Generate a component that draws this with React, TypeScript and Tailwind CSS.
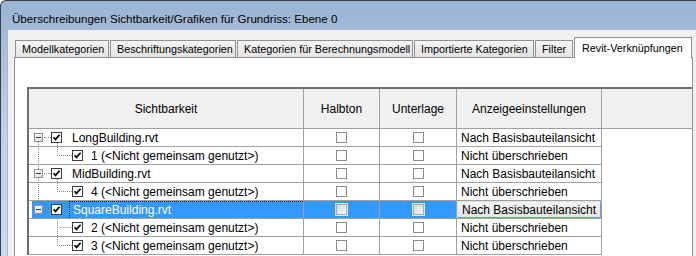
import React from 'react'

type Row = {
  kind: 'root' | 'child'
  label: string
  display: string
  selected?: boolean
}

const rows: Row[] = [
  { kind: 'root', label: 'LongBuilding.rvt', display: 'Nach Basisbauteilansicht' },
  { kind: 'child', label: '1 (<Nicht gemeinsam genutzt>)', display: 'Nicht überschrieben' },
  { kind: 'root', label: 'MidBuilding.rvt', display: 'Nach Basisbauteilansicht' },
  { kind: 'child', label: '4 (<Nicht gemeinsam genutzt>)', display: 'Nicht überschrieben' },
  { kind: 'root', label: 'SquareBuilding.rvt', display: 'Nach Basisbauteilansicht', selected: true },
  { kind: 'child', label: '2 (<Nicht gemeinsam genutzt>)', display: 'Nicht überschrieben' },
  { kind: 'child', label: '3 (<Nicht gemeinsam genutzt>)', display: 'Nicht überschrieben' }
]

const tabs = [
  { label: 'Modellkategorien', w: 'w-[94px]' },
  { label: 'Beschriftungskategorien', w: 'w-[126px]' },
  { label: 'Kategorien für Berechnungsmodell', w: 'w-[176px]' },
  { label: 'Importierte Kategorien', w: 'w-[120px]' },
  { label: 'Filter', w: 'w-[38px]' }
]

function TreeCheck() {
  return (
    <svg width="11" height="11" viewBox="0 0 11 11" className="shrink-0">
      <rect x="0.5" y="0.5" width="10" height="10" fill="#fff" stroke="#3c3c3c" />
      <path d="M2.5 5.2 L4.5 7.4 L8.6 2.8" fill="none" stroke="#000" strokeWidth="1.7" />
    </svg>
  )
}

function Expander() {
  return (
    <div className="w-[9px] h-[9px] shrink-0 border border-[#919191] bg-gradient-to-br from-white to-[#dcdcdc] flex items-center justify-center">
      <div className="w-[5px] h-px bg-[#1f3d66]" />
    </div>
  )
}

function Box({ disabled }: { disabled?: boolean }) {
  return disabled ? (
    <div className="w-[11px] h-[11px] border border-[#a8a8a8] bg-gradient-to-br from-[#d6d6d6] to-[#f8f8f8] outline outline-1 outline-[#dfe9f5]" />
  ) : (
    <div className="w-[11px] h-[11px] border border-[#8a8a8a] bg-white" />
  )
}

export default function App() {
  return (
    <div className="w-[696px] h-[256px] overflow-hidden bg-white font-['Liberation_Sans',Arial,sans-serif] text-black">
      <div className="h-full flex flex-col rounded-tl-[6px] border-l border-t border-[#3a3f47] bg-gradient-to-b from-[#9ab4d3] via-[#bcd1e8] to-[#c8dbef]">
        {/* title */}
        <div className="h-[29px] flex items-center pl-[11px] pt-[6px] text-[11.6px] leading-none whitespace-nowrap">
          Überschreibungen Sichtbarkeit/Grafiken für Grundriss: Ebene 0
        </div>

        <div className="flex-1 ml-[6px] flex flex-col bg-[#f0f0f0] border-l border-[#a9b8c9] pt-[7px] pl-[6px]">
          {/* tabs */}
          <div className="flex items-end gap-px pl-px h-[20px] text-[10.8px] leading-none whitespace-nowrap">
            {tabs.map((t) => (
              <div
                key={t.label}
                className={`${t.w} h-[17px] shrink-0 flex items-center pl-[6px] border border-b-0 border-[#8e9196] bg-gradient-to-b from-[#f4f4f4] to-[#e4e4e4]`}
              >
                {t.label}
              </div>
            ))}
            <div className="relative z-10 -mb-px w-[118px] h-[21px] shrink-0 flex items-center pl-[7px] border border-b-0 border-[#8e9196] bg-white">
              Revit-Verknüpfungen
            </div>
          </div>

          {/* panel */}
          <div className="flex-1 mr-[3px] border border-b-0 border-[#8e9196] bg-white pl-[12px] pt-[29px]">
            <div className="border-t-2 border-l-2 border-[#6e6e6e] text-[12px] leading-none whitespace-nowrap">
              {/* header */}
              <div className="grid grid-cols-[275px_76px_77px_145px_1fr] h-[40px] bg-[#f0f0f0]">
                <div className="border-r border-b border-[#a0a0a0] flex items-center justify-center">Sichtbarkeit</div>
                <div className="border-r border-b border-[#a0a0a0] flex items-center justify-center">Halbton</div>
                <div className="border-r border-b border-[#a0a0a0] flex items-center justify-center">Unterlage</div>
                <div className="border-r border-b border-[#a0a0a0] flex items-center justify-center">Anzeigeeinstellungen</div>
                <div className="border-b border-[#a0a0a0]" />
              </div>

              {/* body */}
              <div className="relative">
                {rows.map((r, i) => (
                  <div key={i} className="grid grid-cols-[275px_76px_77px_145px_1fr] h-[18px]">
                    <div className="border-r border-b border-[#a0a0a0] flex">
                      {r.kind === 'root' ? (
                        <div className={`flex-1 flex items-center ml-[3px] pl-[2px] ${r.selected ? 'bg-[#3399ff]' : ''}`}>
                          <Expander />
                          <div className="w-[8px] shrink-0" />
                          <TreeCheck />
                          <div className="w-[7px] shrink-0" />
                          <div
                            className={`flex-1 h-full flex items-center pl-[3px] ${
                              r.selected ? 'text-white border-t border-l border-dotted border-[#1a1a1a]' : ''
                            }`}
                          >
                            {r.label}
                          </div>
                        </div>
                      ) : (
                        <div className="flex-1 flex items-center pl-[43px]">
                          <TreeCheck />
                          <span className="ml-[8px]">{r.label}</span>
                        </div>
                      )}
                    </div>
                    <div className={`border-r border-b border-[#a0a0a0] flex items-center justify-center ${r.selected ? 'bg-[#3399ff]' : ''}`}>
                      <Box disabled={r.selected} />
                    </div>
                    <div className={`border-r border-b border-[#a0a0a0] flex items-center justify-center ${r.selected ? 'bg-[#3399ff]' : ''}`}>
                      <Box disabled={r.selected} />
                    </div>
                    <div className="border-r border-b border-[#a0a0a0] flex">
                      {r.selected ? (
                        <div className="flex-1 flex items-center pl-[4px] border border-[#5da2e8] border-t-[#e2e2e2] border-l-[#e2e2e2] bg-gradient-to-b from-[#f4f4f4] to-[#e4e4e4]">
                          {r.display}
                        </div>
                      ) : (
                        <div className="flex-1 flex items-center pl-[4px]">{r.display}</div>
                      )}
                    </div>
                    <div />
                  </div>
                ))}

                {/* tree connector lines */}
                <svg className="absolute left-0 top-0 pointer-events-none" width="275" height="126">
                  <g stroke="#8a8a8a" strokeDasharray="1 1" fill="none">
                    <path d="M9.5 13 V40 M9.5 49 V76" />
                    <path d="M15 8.5 H22 M15 44.5 H22 M15 80.5 H22" />
                    <path d="M28.5 14 V26.5 H43" />
                    <path d="M28.5 50 V62.5 H43" />
                    <path d="M28.5 86 V116.5 H43 M28.5 98.5 H43" />
                  </g>
                </svg>
              </div>
            </div>
          </div>
        </div>
      </div>
    </div>
  )
}
